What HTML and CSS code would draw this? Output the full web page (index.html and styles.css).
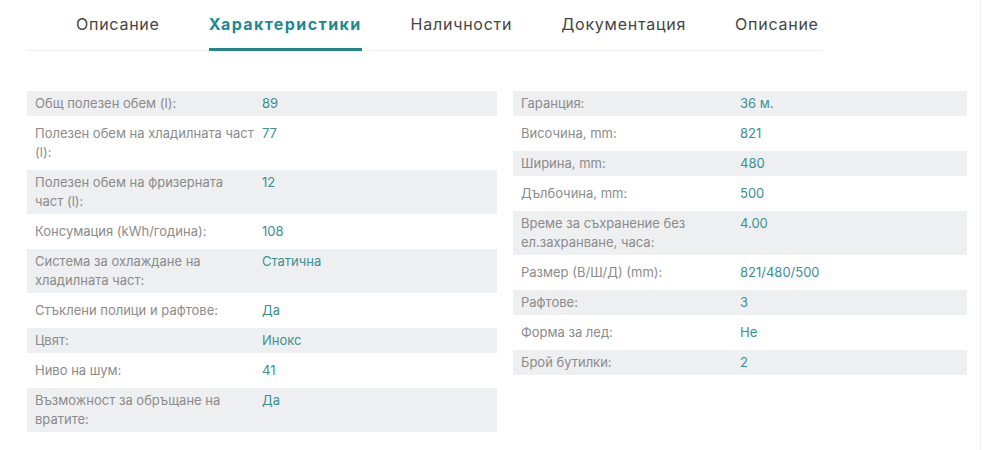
FILE: index.html
```html
<!DOCTYPE html>
<html lang="bg">
<head>
<meta charset="utf-8">
<title>Характеристики</title>
<link rel="stylesheet" href="styles.css">
</head>
<body>
<div class="page">
  <nav class="tabs">
    <a class="tab">Описание</a>
    <a class="tab active">Характеристики</a>
    <a class="tab">Наличности</a>
    <a class="tab">Документация</a>
    <a class="tab">Описание</a>
  </nav>
  <div class="specs">
    <div class="spec-table left">
      <div class="row shade"><div class="label">Общ полезен обем (l):</div><div class="value">89</div></div>
      <div class="row"><div class="label">Полезен обем на хладилната част (l):</div><div class="value">77</div></div>
      <div class="row shade"><div class="label">Полезен обем на фризерната<br>част (l):</div><div class="value">12</div></div>
      <div class="row"><div class="label">Консумация (kWh/година):</div><div class="value">108</div></div>
      <div class="row shade"><div class="label">Система за охлаждане на хладилната част:</div><div class="value">Статична</div></div>
      <div class="row"><div class="label">Стъклени полици и рафтове:</div><div class="value">Да</div></div>
      <div class="row shade"><div class="label">Цвят:</div><div class="value">Инокс</div></div>
      <div class="row"><div class="label">Ниво на шум:</div><div class="value">41</div></div>
      <div class="row shade"><div class="label">Възможност за обръщане на вратите:</div><div class="value">Да</div></div>
    </div>
    <div class="spec-table right">
      <div class="row shade"><div class="label">Гаранция:</div><div class="value">36 м.</div></div>
      <div class="row"><div class="label">Височина, mm:</div><div class="value">821</div></div>
      <div class="row shade"><div class="label">Ширина, mm:</div><div class="value">480</div></div>
      <div class="row"><div class="label">Дълбочина, mm:</div><div class="value">500</div></div>
      <div class="row shade"><div class="label">Време за съхранение без ел.захранване, часа:</div><div class="value">4.00</div></div>
      <div class="row"><div class="label">Размер (В/Ш/Д) (mm):</div><div class="value">821/480/500</div></div>
      <div class="row shade"><div class="label">Рафтове:</div><div class="value">3</div></div>
      <div class="row"><div class="label">Форма за лед:</div><div class="value">Не</div></div>
      <div class="row shade"><div class="label">Брой бутилки:</div><div class="value">2</div></div>
    </div>
  </div>
</div>
</body>
</html>
```
FILE: styles.css
```css
html, body {
  margin: 0;
  padding: 0;
  background: #ffffff;
}
body {
  font-family: "Inter", "Open Sans", "Noto Sans", sans-serif;
  color: #8a8a8a;
}
.page {
  width: 981px;
  height: 450px;
  box-sizing: border-box;
  border-right: 1px solid #f1f1f1;
  padding-left: 27px;
}
.tabs {
  display: flex;
  gap: 49px;
  width: 795px;
  box-sizing: border-box;
  padding-left: 49px;
  border-bottom: 1px solid #f0f0f0;
  height: 51px;
}
.tab {
  display: block;
  padding-top: 13px;
  height: 35px;
  line-height: 22px;
  font-size: 16px;
  letter-spacing: 0.75px;
  color: #444444;
  cursor: pointer;
  white-space: nowrap;
}
.tab.active {
  color: #1d8a90;
  font-weight: 700;
  letter-spacing: 1.4px;
  border-bottom: 3px solid #24868c;
}
.specs {
  display: grid;
  grid-template-columns: 470px 454px;
  column-gap: 16px;
  align-items: start;
  margin-top: 40px;
}
.spec-table {
  display: flex;
  flex-direction: column;
  gap: 5px;
}
.row {
  display: grid;
  grid-template-columns: 50% 50%;
  font-size: 13px;
  line-height: 19px;
}
.row.shade {
  background: #edeff1;
}
.label {
  padding: 3px 0 3px 8px;
  color: #8b8b8b;
}
.value {
  padding: 3px 8px 3px 0;
  color: #3a8f96;
}
```
